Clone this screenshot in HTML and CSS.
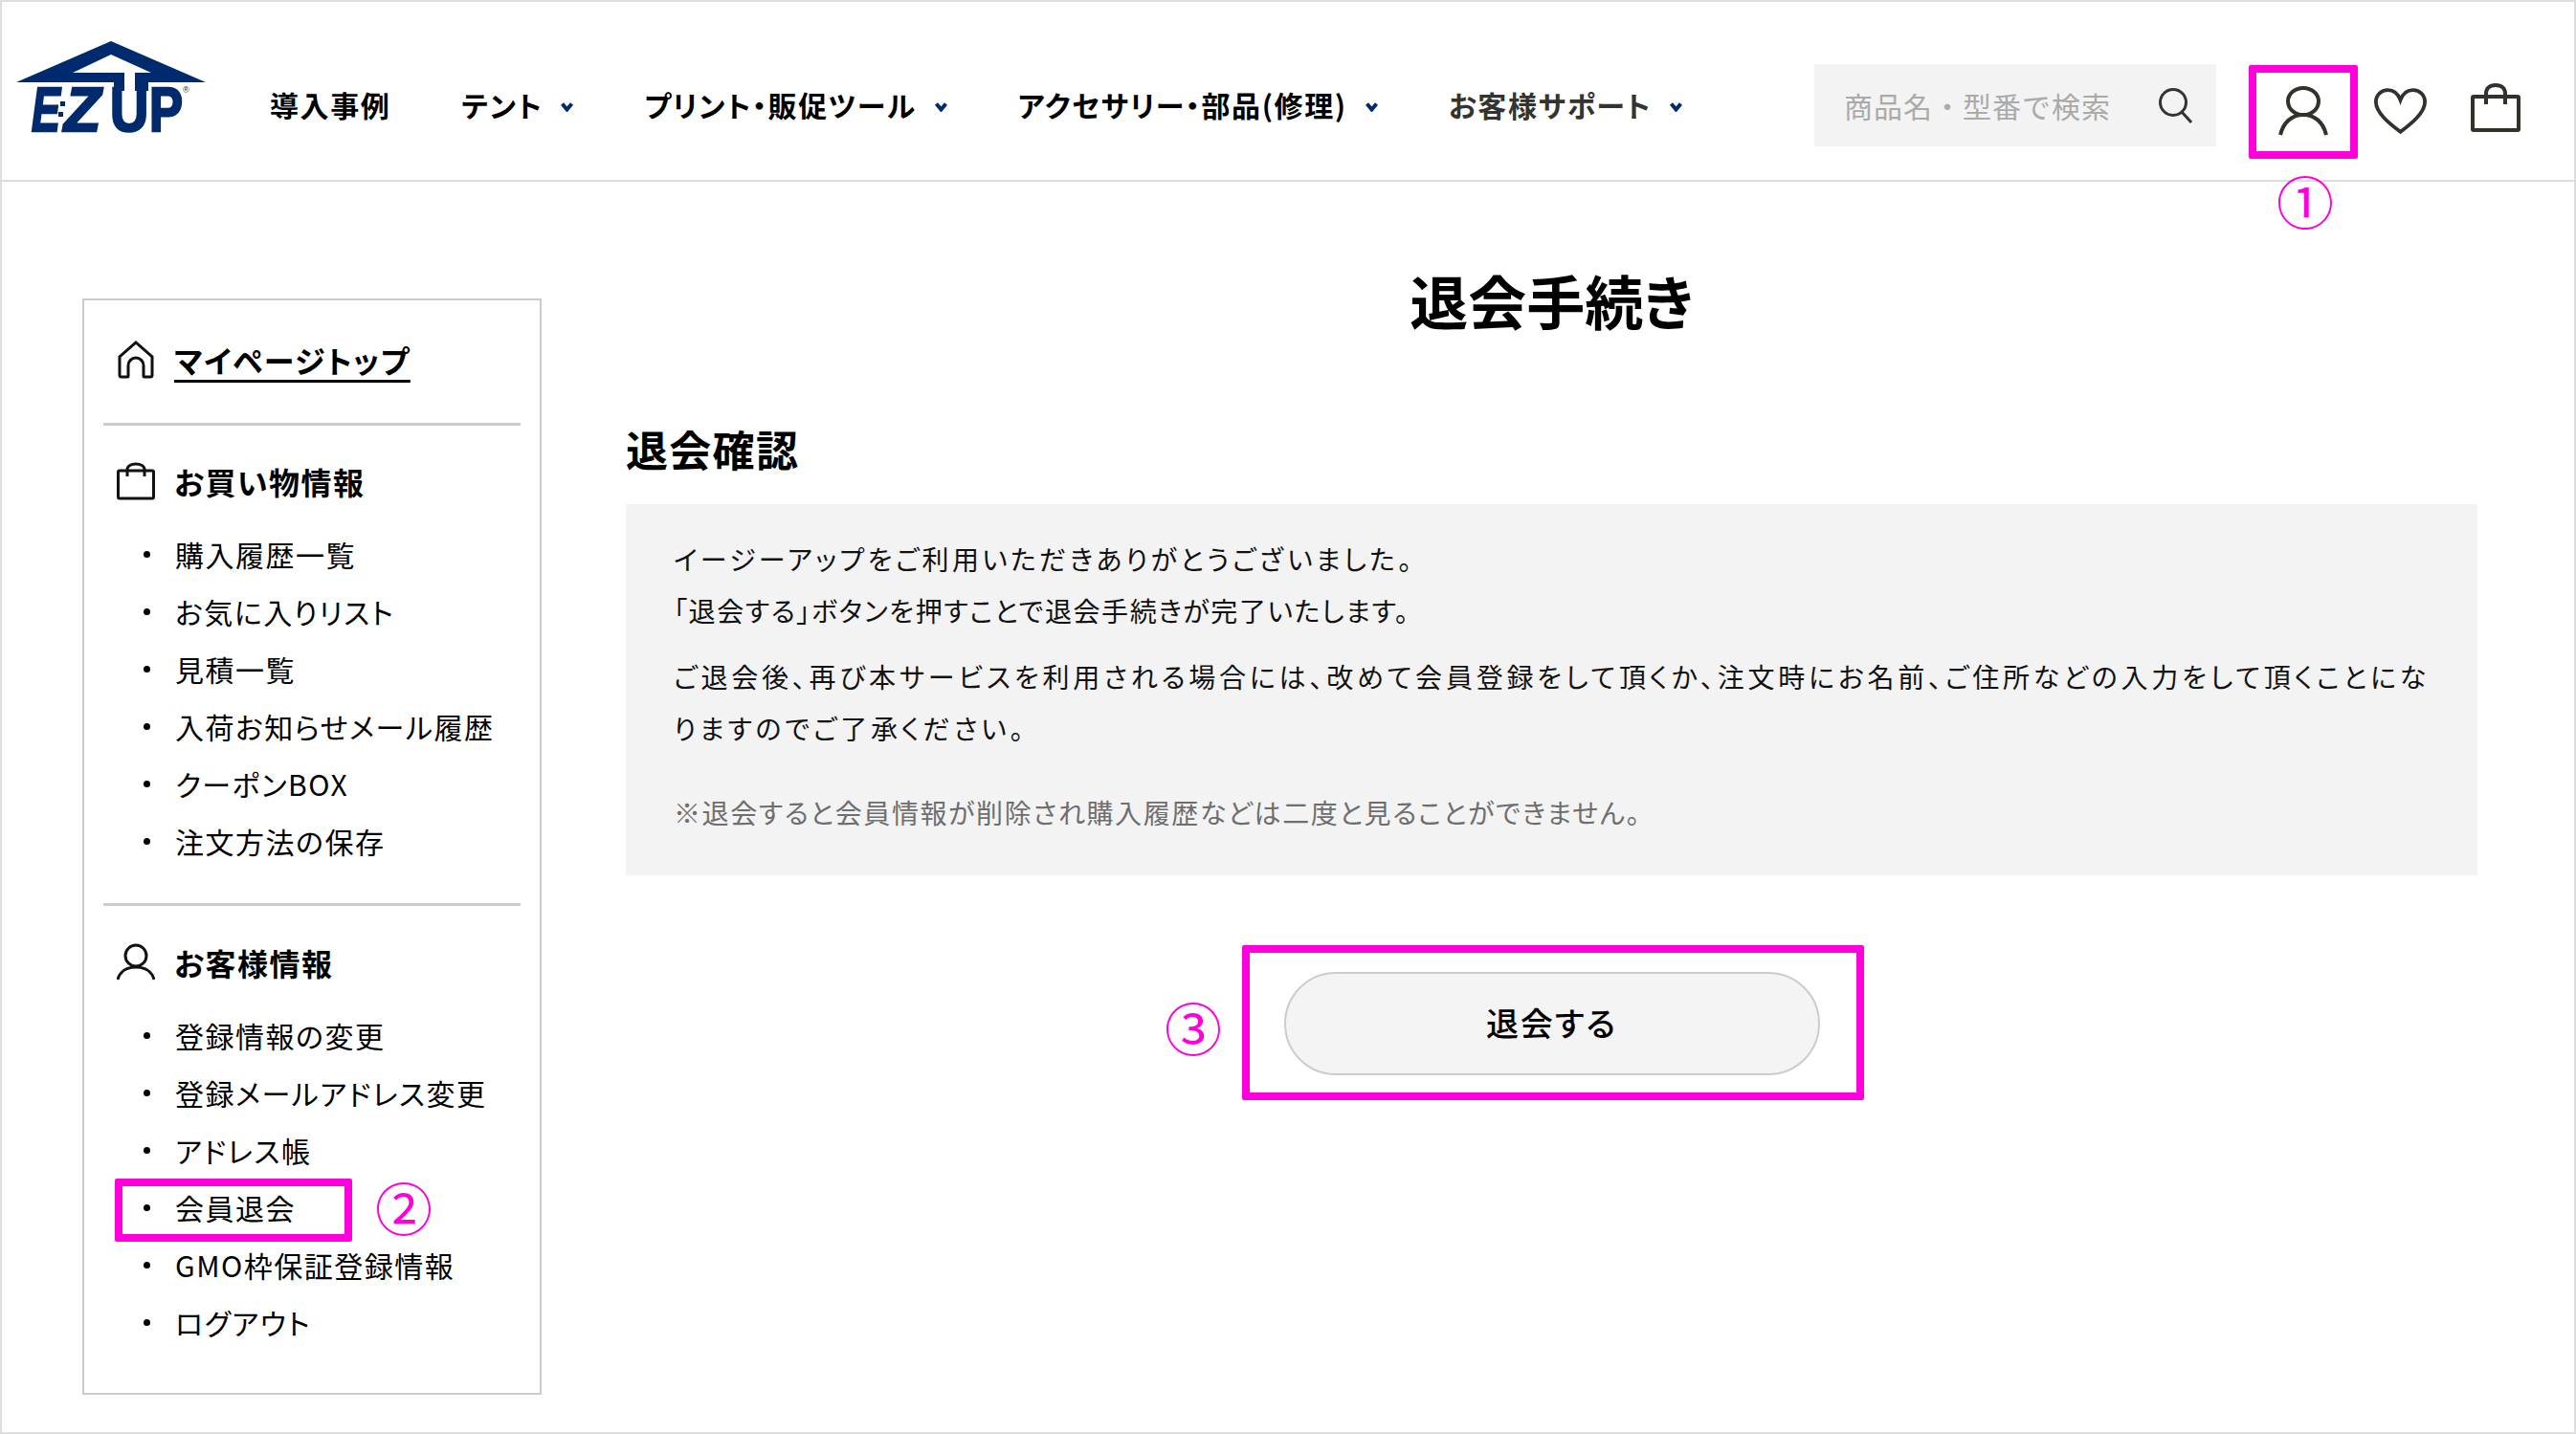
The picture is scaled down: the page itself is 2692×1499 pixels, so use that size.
FILE: index.html
```html
<!DOCTYPE html>
<html lang="ja">
<head>
<meta charset="utf-8">
<title>退会手続き</title>
<link rel="stylesheet" href="styles.css">
</head>
<body>
<div class="page">
  <header class="header">
    <a class="logo" href="#">
      <svg class="logo-svg" width="200" height="96" viewBox="0 0 200 96">
        <path class="logo-fill" d="M1 43 100 0 199 43ZM60 33H142L100 14Z" fill-rule="evenodd"/>
        <text class="logo-text" transform="translate(17 94) scale(0.7 1)">E</text>
        <text class="logo-text" transform="translate(51 94) scale(0.98 1)">Z</text>
        <text class="logo-text logo-upright" transform="translate(99 94) scale(0.87 1)">U</text>
        <text class="logo-text logo-upright" transform="translate(140 94) scale(0.82 1)">P</text>
        <rect class="logo-fill" x="47" y="63" width="5" height="5"/>
        <rect class="logo-fill" x="45" y="74" width="5" height="5"/>
        <rect class="logo-fill" x="103" y="42" width="36" height="10"/>
        <rect class="logo-white" x="114" y="32" width="11" height="50"/>
        <text class="logo-reg" x="175" y="54">®</text>
      </svg>
    </a>
    <nav class="nav">
      <a class="nav-item" href="#">導入事例</a>
      <a class="nav-item" href="#">テント<svg class="chev" width="13" height="10" viewBox="0 0 13 10"><path d="M1.500 1.500 6.500 7.500l5-6"/></svg></a>
      <a class="nav-item" href="#">プリント・販促ツール<svg class="chev" width="13" height="10" viewBox="0 0 13 10"><path d="M1.500 1.500 6.500 7.500l5-6"/></svg></a>
      <a class="nav-item" href="#">アクセサリー・部品(修理)<svg class="chev" width="13" height="10" viewBox="0 0 13 10"><path d="M1.500 1.500 6.500 7.500l5-6"/></svg></a>
      <a class="nav-item nav-item-soft" href="#">お客様サポート<svg class="chev" width="13" height="10" viewBox="0 0 13 10"><path d="M1.500 1.500 6.500 7.500l5-6"/></svg></a>
    </nav>
    <div class="tools">
      <div class="search">
        <span class="search-text">商品名・型番で検索</span>
        <svg class="ico-search" width="36" height="37" viewBox="0 0 36 37"><ellipse cx="15" cy="15" rx="13.500" ry="13.500"/><path d="M24 25 34 36"/></svg>
      </div>
      <a class="tool tool-user" href="#">
        <svg width="52" height="50" viewBox="0 0 52 50"><ellipse cx="26" cy="15" rx="16" ry="14"/><path d="M2 50C5 37 14 29 26 29s21 8 24 21"/></svg>
      </a>
      <a class="tool tool-heart" href="#">
        <svg width="55" height="48" viewBox="0 0 58 50"><path d="M29 48C17 39 2 27 2 15 2 7 8 2 15 2c6 0 11 3 14 11 3-8 8-11 14-11 7 0 13 5 13 13 0 12-15 24-27 33Z"/></svg>
      </a>
      <a class="tool tool-bag" href="#">
        <svg width="52" height="50" viewBox="0 0 52 50"><rect x="2" y="13" width="48" height="35" rx="1"/><path d="M16 21V10C16 4 20 1 26 1s10 3 10 9v11"/></svg>
      </a>
    </div>
  </header>

  <div class="body">
    <aside class="side">
      <div class="side-block side-top">
        <h2 class="side-head">
          <svg class="side-ico" width="40" height="40" viewBox="0 0 40 40"><path d="M3 36V17L20 2l17 15v19a2 2 0 0 1-2 2h-6a1 1 0 0 1-1-1V26a8 8 0 0 0-16 0v11a1 1 0 0 1-1 1H5a2 2 0 0 1-2-2Z"/></svg>
          <a class="side-toplink" href="#">マイページトップ</a>
        </h2>
      </div>
      <div class="side-block">
        <h2 class="side-head">
          <svg class="side-ico" width="40" height="40" viewBox="0 0 40 40"><rect x="1.500" y="9" width="37" height="29" rx="1.500"/><path d="M11 15V8c0-4 4-6 9-6s9 2 9 6v7"/></svg>
          お買い物情報
        </h2>
        <ul class="side-list">
          <li><a href="#">購入履歴一覧</a></li>
          <li><a href="#">お気に入りリスト</a></li>
          <li><a href="#">見積一覧</a></li>
          <li><a href="#">入荷お知らせメール履歴</a></li>
          <li><a href="#">クーポンBOX</a></li>
          <li><a href="#">注文方法の保存</a></li>
        </ul>
      </div>
      <div class="side-block side-last">
        <h2 class="side-head">
          <svg class="side-ico" width="40" height="40" viewBox="0 0 40 40"><circle cx="20" cy="13" r="11"/><path d="M1 38c2-8 9-13 19-13s17 5 19 13"/></svg>
          お客様情報
        </h2>
        <ul class="side-list">
          <li><a href="#">登録情報の変更</a></li>
          <li><a href="#">登録メールアドレス変更</a></li>
          <li><a href="#">アドレス帳</a></li>
          <li><a href="#">会員退会</a></li>
          <li><a href="#">GMO枠保証登録情報</a></li>
          <li><a href="#">ログアウト</a></li>
        </ul>
      </div>
    </aside>

    <main class="main">
      <h1 class="title">退会手続き</h1>
      <h2 class="sub">退会確認</h2>
      <div class="notice">
        <p class="notice-p"><span class="line-wide">イージーアップをご利用いただきありがとうございました。</span><br><span class="line-tight">「退会する」ボタンを押すことで退会手続きが完了いたします。</span></p>
        <p class="notice-p notice-just">ご退会後、再び本サービスを利用される場合には、改めて会員登録をして頂くか、注文時にお名前、ご住所などの入力をして頂くことになりますのでご了承ください。</p>
        <p class="notice-note">※退会すると会員情報が削除され購入履歴などは二度と見ることができません。</p>
      </div>
      <div class="actions">
        <button class="btn" type="button">退会する</button>
      </div>
    </main>
  </div>

  <div class="mark mark-1"></div>
  <div class="num num-1">①</div>
  <div class="mark mark-2"></div>
  <div class="num num-2">②</div>
  <div class="mark mark-3"></div>
  <div class="num num-3">③</div>
</div>
</body>
</html>
```
FILE: styles.css
```css
* { box-sizing: border-box; }
html, body { margin: 0; padding: 0; }
body {
  background: #fff;
  color: #000;
  font-family: "Noto Sans CJK JP", "Noto Sans", sans-serif;
  font-feature-settings: "palt";
}
a { color: inherit; text-decoration: none; }
.page {
  position: relative;
  width: 2692px;
  height: 1499px;
  border: 2px solid #ddd;
  overflow: hidden;
}
.header {
  display: flex;
  align-items: center;
  height: 188px;
  border-bottom: 2px solid #ddd;
}
.logo { display: block; flex: none; margin: -8px 0 0 14px; width: 200px; height: 96px; }
.logo-svg { display: block; overflow: visible; }
.logo-fill { fill: #002a6e; }
.logo-white { fill: #fff; }
.logo-text {
  font-family: "Liberation Sans", sans-serif;
  font-weight: 700;
  font-style: italic;
  font-size: 64px;
  fill: #002a6e;
  stroke: #002a6e;
  stroke-width: 2.500px;
}
.logo-upright { font-style: normal; }
.logo-reg { font-family: "Liberation Sans", sans-serif; font-size: 9px; fill: #002a6e; }
.nav {
  display: flex;
  align-items: center;
  gap: 74px;
  margin-left: 66px;
  padding-top: 28px;
}
.nav-item {
  display: flex;
  align-items: center;
  gap: 19px;
  font-size: 30px;
  font-weight: 700;
  letter-spacing: 1.600px;
  color: #000;
  white-space: nowrap;
}
.nav-item-soft { color: #333; }
.chev { flex: none; margin-top: 5px; fill: none; stroke: #002a6e; stroke-width: 4; }
.tools {
  display: flex;
  align-items: center;
  margin-left: auto;
  padding-top: 30px;
  margin-right: 56px;
}
.search {
  display: flex;
  align-items: center;
  justify-content: space-between;
  width: 420px;
  height: 86px;
  padding: 0 24px 0 31px;
  background: #f3f3f3;
}
.search-text { font-size: 30px; font-feature-settings: normal; letter-spacing: 1px; color: #aaa; white-space: nowrap; }
.ico-search { flex: none; fill: none; stroke: #333; stroke-width: 3; }
.tool { display: flex; align-items: center; justify-content: center; margin-top: 12px; }
.tool svg { fill: none; stroke: #33312c; stroke-width: 4; overflow: visible; }
.tool-user { width: 114px; height: 98px; margin-left: 34px; }
.tool-heart { width: 55px; margin-left: 17px; }
.tool-bag { width: 52px; margin-left: 46px; margin-top: 6px; }
.body { display: flex; align-items: flex-start; padding: 122px 0 0 84px; }
.side {
  flex: none;
  width: 480px;
  height: 1146px;
  padding: 0 20px;
  border: 2px solid #ccc;
}
.side-block { padding: 38px 0 35px; border-bottom: 3px solid #ccc; }
.side-top { padding: 42px 0 46px; }
.side-last { border-bottom: 0; padding-top: 39px; }
.side-head {
  display: flex;
  align-items: center;
  gap: 20px;
  margin: 0;
  padding-left: 14px;
  font-size: 32px;
  font-weight: 700;
  letter-spacing: 1.500px;
  line-height: 40px;
}
.side-ico { flex: none; fill: none; stroke: #111; stroke-width: 3; }
.side-toplink { text-decoration: underline; text-decoration-thickness: 3px; text-underline-offset: 7px; }
.side-list { list-style: none; margin: 26px 0 0; padding: 0; }
.side-list li {
  position: relative;
  padding-left: 75px;
  font-size: 30px;
  letter-spacing: 1.500px;
  line-height: 60px;
}
.side-list li::before {
  content: "";
  position: absolute;
  left: 42px;
  top: 27px;
  width: 7px;
  height: 7px;
  border-radius: 50%;
  background: #000;
}
.main { flex: none; width: 1935px; margin-left: 88px; }
.title {
  margin: -42px 0 0;
  text-align: center;
  font-size: 61px;
  font-weight: 700;
  line-height: 88px;
}
.sub {
  margin: 79px 0 0;
  font-size: 44px;
  font-weight: 700;
  letter-spacing: 1.300px;
  line-height: 64px;
}
.notice {
  margin-top: 26px;
  height: 388px;
  padding: 30px 50px;
  background: #f3f3f3;
}
.notice-p {
  margin: 0 0 15px;
  font-size: 28px;
  line-height: 54px;
  color: #111;
}
.line-wide { letter-spacing: 3.300px; }
.line-tight { letter-spacing: 1.600px; }
.notice-just { letter-spacing: 3.700px; text-align: justify; line-break: anywhere; }
.notice-note {
  margin: 41px 0 0;
  font-size: 28px;
  letter-spacing: 1.600px;
  line-height: 40px;
  color: #6e6e6e;
}
.actions { display: flex; justify-content: center; margin-top: 101px; }
.btn {
  width: 560px;
  height: 108px;
  padding: 0 0 3px;
  border: 2px solid #ccc;
  border-radius: 54px;
  background: #f4f4f4;
  color: #000;
  font-family: inherit;
  font-feature-settings: inherit;
  font-size: 34px;
  font-weight: 500;
  letter-spacing: 2px;
}
.mark { position: absolute; border: 8px solid #ff00dd; border-radius: 2px; }
.mark-1 { left: 2348px; top: 66px; width: 114px; height: 98px; }
.mark-2 { left: 118px; top: 1230px; width: 248px; height: 66px; }
.mark-3 { left: 1296px; top: 986px; width: 650px; height: 162px; }
.num { position: absolute; color: #ff00dd; font-size: 60px; line-height: 60px; font-feature-settings: normal; }
.num-1 { left: 2377px; top: 177px; }
.num-2 { left: 390px; top: 1229px; }
.num-3 { left: 1215px; top: 1041px; }
```
